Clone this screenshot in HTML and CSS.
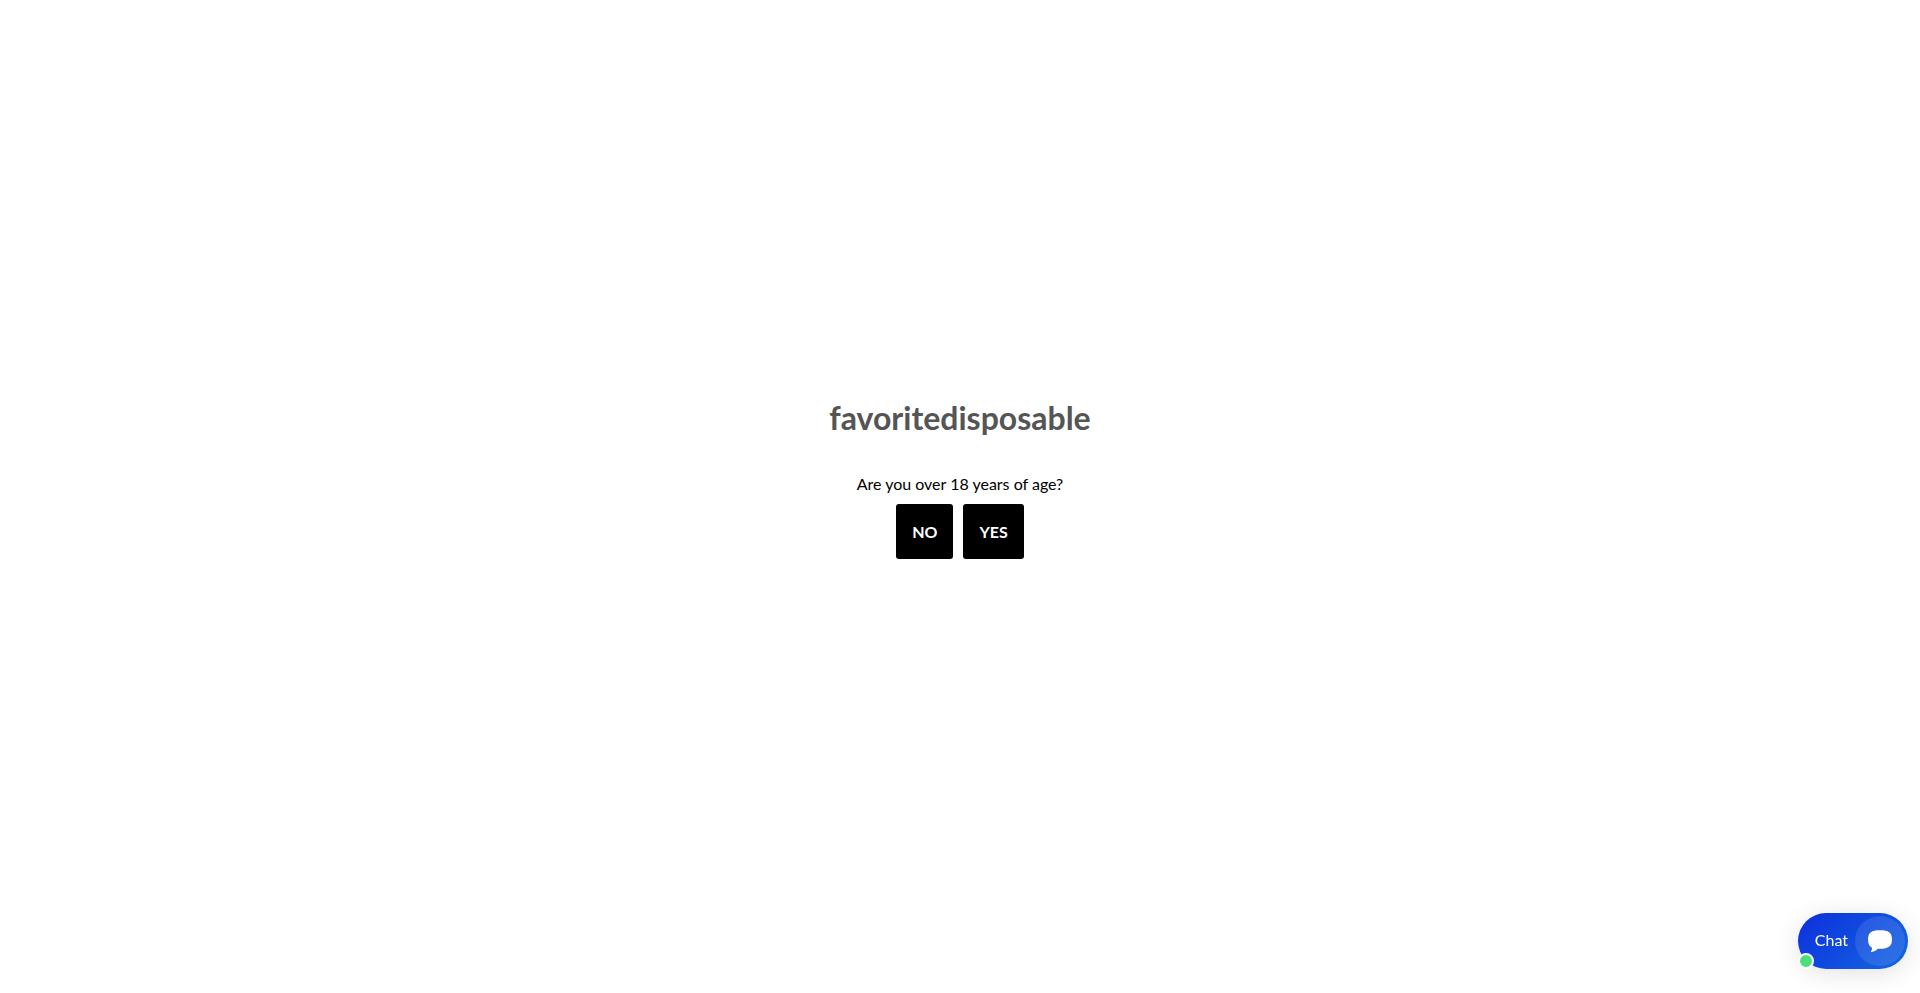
FILE: index.html
```
<!DOCTYPE html>
<html lang="en">
<head>
<meta charset="utf-8">
<title>favoritedisposable</title>
<link rel="stylesheet" href="styles.css">
</head>
<body>
<main class="gate">
  <h1 class="gate-title">favoritedisposable</h1>
  <p class="gate-question">Are you over 18 years of age?</p>
  <div class="gate-actions">
    <button class="gate-button" type="button">NO</button>
    <button class="gate-button" type="button">YES</button>
  </div>
</main>
<button class="chat" type="button">
  <span class="chat-label">Chat</span>
  <span class="chat-icon">
    <svg width="26" height="24" viewBox="0 0 26 24" aria-hidden="true"><path fill="#fff" d="M13 1.2C4.500 1.200 1 3.500 1 10.500C1 14.500 2.200 17 4.800 18.400C5.200 20 4.700 21.300 4 22.200C3.700 22.700 4 23 4.600 22.900C7.500 22.500 9.500 21.500 10.700 19.800C21 20.300 25 17.500 25 10.500C25 3.500 21.500 1.200 13 1.200Z"/></svg>
  </span>
  <span class="chat-status"></span>
</button>
</body>
</html>
```
FILE: styles.css
```
* { box-sizing: border-box; }

body {
  margin: 0;
  background: #fff;
  font-family: Lato, sans-serif;
  font-size: 16px;
  line-height: 24px;
  color: #000;
}

.gate {
  min-height: 100vh;
  display: flex;
  flex-direction: column;
  align-items: center;
  justify-content: center;
  padding-bottom: 40px;
}

.gate-title {
  margin: 0 0 30px;
  font-size: 32px;
  line-height: 48px;
  font-weight: 700;
  color: #555;
}

.gate-question { margin: 0 0 8px; }

.gate-actions {
  display: flex;
  gap: 10px;
}

.gate-button {
  height: 55px;
  padding: 0 16px;
  border: 0;
  border-radius: 3px;
  background: #000;
  color: #fff;
  font: inherit;
  font-weight: 700;
}

.chat {
  position: fixed;
  right: 12px;
  bottom: 24px;
  display: flex;
  align-items: center;
  gap: 7px;
  height: 56px;
  padding: 0 3px 0 17px;
  border: 0;
  border-radius: 28px;
  background: linear-gradient(135deg, #0c2fdc, #1568e2);
  box-shadow: 0 4px 24px rgba(0, 0, 0, 0.12);
  color: #fff;
  font: inherit;
}

.chat-label { padding-bottom: 2px; }

.chat-icon {
  display: flex;
  align-items: center;
  justify-content: center;
  width: 50px;
  height: 50px;
  border-radius: 50%;
  background: rgba(255, 255, 255, 0.1);
}

.chat-status {
  position: absolute;
  left: 0;
  bottom: 0;
  width: 16px;
  height: 16px;
  border: 2px solid #fff;
  border-radius: 50%;
  background: #48e07a;
}
```
